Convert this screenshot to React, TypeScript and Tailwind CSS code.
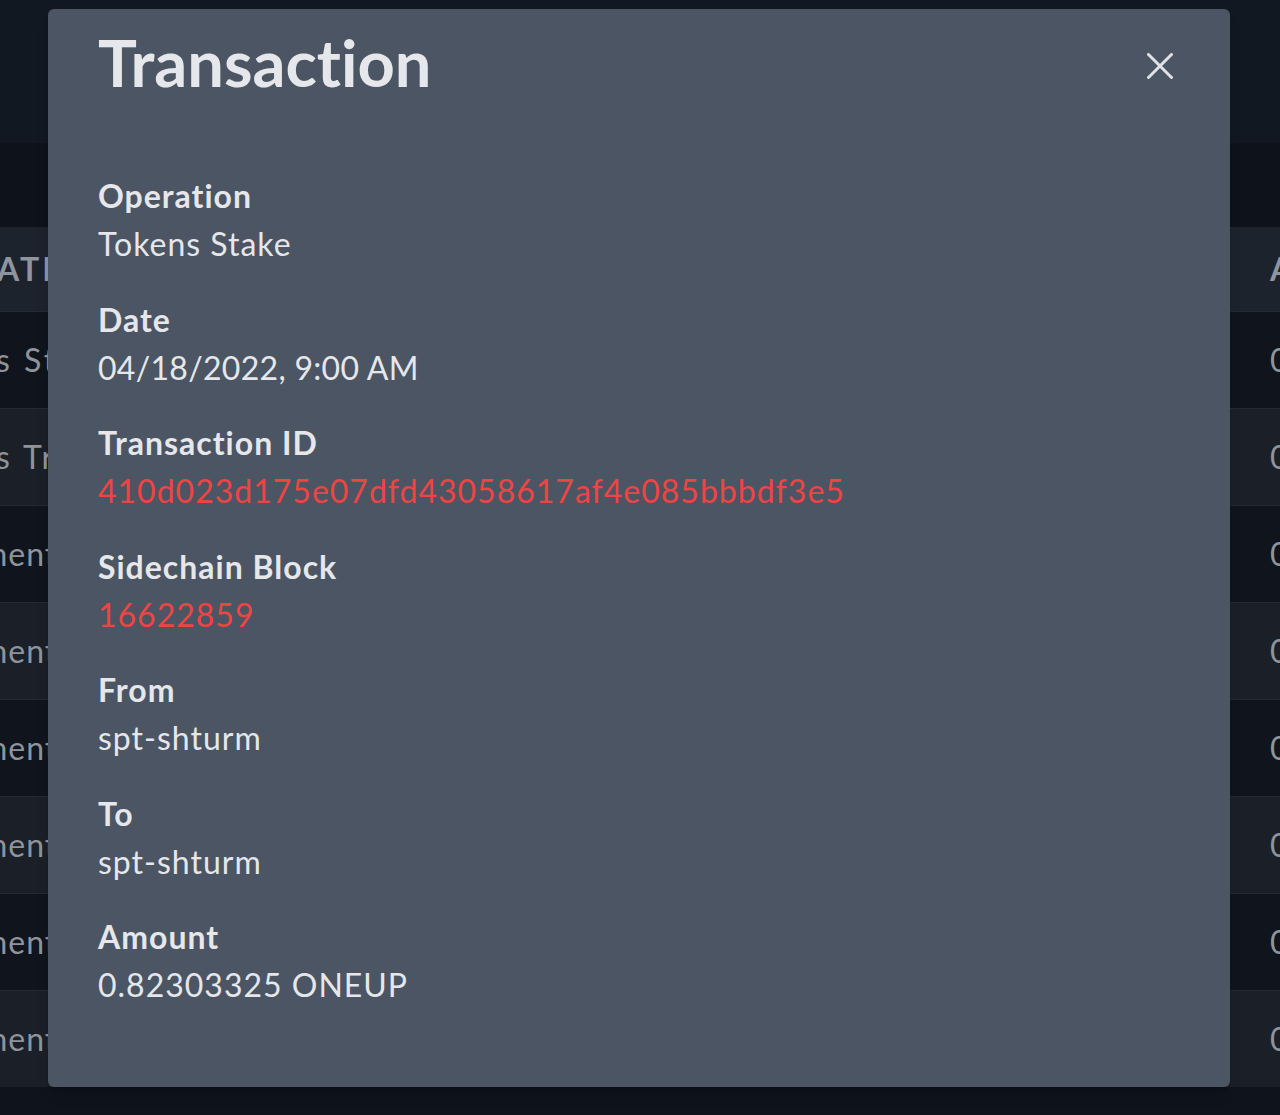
import React from 'react';

const fields = [
  { label: 'Operation', value: 'Tokens Stake' },
  { label: 'Date', value: '04/18/2022, 9:00 AM', tight: true },
  { label: 'Transaction ID', value: '410d023d175e07dfd43058617af4e085bbbdf3e5', link: true },
  { label: 'Sidechain Block', value: '16622859', link: true },
  { label: 'From', value: 'spt-shturm' },
  { label: 'To', value: 'spt-shturm' },
  { label: 'Amount', value: '0.82303325 ONEUP' },
];

// table rows behind the overlay
const rows = [
  { op: 's Stake', amount: '0.82303325' },
  { op: 's Transfer', amount: '0.5' },
  { op: 'ment', amount: '0.1' },
  { op: 'ment', amount: '0.1' },
  { op: 'ment', amount: '0.1' },
  { op: 'ment', amount: '0.1' },
  { op: 'ment', amount: '0.1' },
  { op: 'ment', amount: '0.1' },
];

const App = () => {
  return (
    <div
      className="relative w-[1280px] h-[1115px] overflow-hidden bg-[#0e131c] text-[32px] [font-variant-ligatures:none]"
      style={{ fontFamily: 'Lato, "Open Sans", sans-serif' }}
    >
      {/* page behind the modal (already dimmed) */}
      <div className="h-[143px] bg-[#111822]" />
      <div className="h-[84px] bg-[#0d121b]" />
      <div className="flex h-[84px] items-center justify-between bg-[#1d232d] font-bold text-[#8e959e]">
        <span className="ml-[-3px] whitespace-nowrap tracking-[3px]">ATION</span>
        <span className="w-[10px] whitespace-nowrap">AMOUNT</span>
      </div>
      {rows.map((row, i) => (
        <div
          key={i}
          className={`flex h-[97px] items-center justify-between border-t border-[#242a33] text-[#8f949b] ${
            i % 2 === 0 ? 'bg-[#0f141d]' : 'bg-[#1a1f28]'
          }`}
        >
          <span
            className={`whitespace-nowrap ${row.op === 'ment' ? 'ml-[-19px] tracking-[1px]' : 'ml-[-4px] tracking-[3px]'}`}
          >
            {row.op}
          </span>
          <span className="w-[10px] whitespace-nowrap">{row.amount}</span>
        </div>
      ))}

      {/* modal */}
      <div className="absolute left-[48px] top-[9px] w-[1182px] rounded-md bg-[#4b5563] pl-[50px] pr-[50px] pt-[21px] pb-[78px] shadow-lg">
        <div className="flex items-start justify-between">
          <h2 className="text-[65px] font-bold leading-[64px] text-[#e5e7eb]">Transaction</h2>
          <button className="mt-[16px] flex h-[40px] w-[40px] items-center justify-center text-[#dfe2e6]">
            <svg width="26" height="26" viewBox="0 0 26 26" fill="none" stroke="currentColor" strokeWidth="3" strokeLinecap="round">
              <path d="M1.5 1.5L24.5 24.5M24.5 1.5L1.5 24.5" />
            </svg>
          </button>
        </div>

        <div className="mt-[78px] flex flex-col gap-[27.5px]">
          {fields.map((f) => (
            <div key={f.label} className="flex flex-col">
              <span className="text-[32px] font-bold leading-[48px] tracking-[1px] text-[#e5e7eb]">{f.label}</span>
              <span
                className={`text-[32px] leading-[48px] ${f.tight ? 'tracking-[0.3px]' : 'tracking-[1px]'} ${
                  f.link ? 'text-[#ef4444]' : 'text-[#e5e7eb]'
                }`}
              >
                {f.value}
              </span>
            </div>
          ))}
        </div>
      </div>
    </div>
  );
};

export default App;
